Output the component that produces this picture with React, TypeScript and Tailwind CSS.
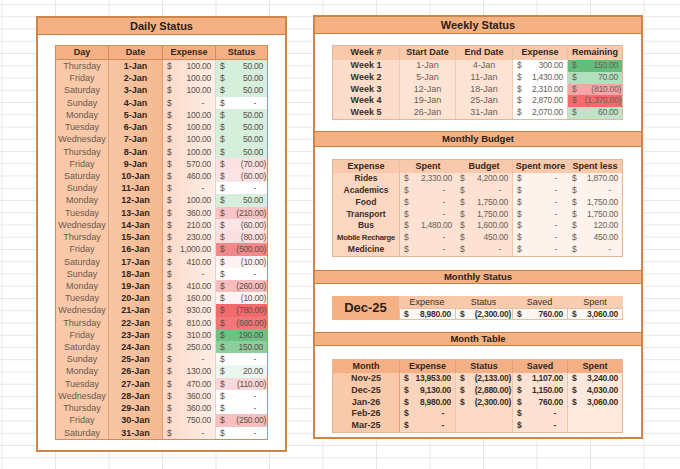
import React from 'react';

type Daily = { day: string; date: string; exp: string; st: string; c: string };

const DAILY: Daily[] = [
  { day: 'Thursday', date: '1-Jan', exp: '100.00', st: '50.00', c: '#d6eedc' },
  { day: 'Friday', date: '2-Jan', exp: '100.00', st: '50.00', c: '#d6eedc' },
  { day: 'Saturday', date: '3-Jan', exp: '100.00', st: '50.00', c: '#d6eedc' },
  { day: 'Sunday', date: '4-Jan', exp: '-', st: '-', c: '#ffffff' },
  { day: 'Monday', date: '5-Jan', exp: '100.00', st: '50.00', c: '#d6eedc' },
  { day: 'Tuesday', date: '6-Jan', exp: '100.00', st: '50.00', c: '#d6eedc' },
  { day: 'Wednesday', date: '7-Jan', exp: '100.00', st: '50.00', c: '#d6eedc' },
  { day: 'Thursday', date: '8-Jan', exp: '100.00', st: '50.00', c: '#d6eedc' },
  { day: 'Friday', date: '9-Jan', exp: '570.00', st: '(70.00)', c: '#fbe1e2' },
  { day: 'Saturday', date: '10-Jan', exp: '460.00', st: '(60.00)', c: '#fbe4e5' },
  { day: 'Sunday', date: '11-Jan', exp: '-', st: '-', c: '#ffffff' },
  { day: 'Monday', date: '12-Jan', exp: '100.00', st: '50.00', c: '#d6eedc' },
  { day: 'Tuesday', date: '13-Jan', exp: '360.00', st: '(210.00)', c: '#f8c4c5' },
  { day: 'Wednesday', date: '14-Jan', exp: '210.00', st: '(60.00)', c: '#fbe4e5' },
  { day: 'Thursday', date: '15-Jan', exp: '230.00', st: '(80.00)', c: '#fadfe0' },
  { day: 'Friday', date: '16-Jan', exp: '1,000.00', st: '(500.00)', c: '#f48789' },
  { day: 'Saturday', date: '17-Jan', exp: '410.00', st: '(10.00)', c: '#fdf3f3' },
  { day: 'Sunday', date: '18-Jan', exp: '-', st: '-', c: '#ffffff' },
  { day: 'Monday', date: '19-Jan', exp: '410.00', st: '(260.00)', c: '#f7bcbd' },
  { day: 'Tuesday', date: '20-Jan', exp: '160.00', st: '(10.00)', c: '#fdf3f3' },
  { day: 'Wednesday', date: '21-Jan', exp: '930.00', st: '(780.00)', c: '#f26a6c' },
  { day: 'Thursday', date: '22-Jan', exp: '810.00', st: '(660.00)', c: '#f37678' },
  { day: 'Friday', date: '23-Jan', exp: '310.00', st: '190.00', c: '#6cc183' },
  { day: 'Saturday', date: '24-Jan', exp: '250.00', st: '150.00', c: '#8ccf9d' },
  { day: 'Sunday', date: '25-Jan', exp: '-', st: '-', c: '#ffffff' },
  { day: 'Monday', date: '26-Jan', exp: '130.00', st: '20.00', c: '#ebf6ee' },
  { day: 'Tuesday', date: '27-Jan', exp: '470.00', st: '(110.00)', c: '#fad7d8' },
  { day: 'Wednesday', date: '28-Jan', exp: '360.00', st: '-', c: '#ffffff' },
  { day: 'Thursday', date: '29-Jan', exp: '360.00', st: '-', c: '#ffffff' },
  { day: 'Friday', date: '30-Jan', exp: '750.00', st: '(250.00)', c: '#f7bfc0' },
  { day: 'Saturday', date: '31-Jan', exp: '-', st: '-', c: '#ffffff' },
];

const WEEKS = [
  { w: 'Week 1', s: '1-Jan', e: '4-Jan', exp: '300.00', rem: '150.00', c: '#63be7b' },
  { w: 'Week 2', s: '5-Jan', e: '11-Jan', exp: '1,430.00', rem: '70.00', c: '#b3dfbf' },
  { w: 'Week 3', s: '12-Jan', e: '18-Jan', exp: '2,310.00', rem: '(810.00)', c: '#f7a4a6' },
  { w: 'Week 4', s: '19-Jan', e: '25-Jan', exp: '2,870.00', rem: '(1,370.00)', c: '#f36b6d' },
  { w: 'Week 5', s: '26-Jan', e: '31-Jan', exp: '2,070.00', rem: '60.00', c: '#bfe4c9' },
];

const BUDGET = [
  ['Rides', '2,330.00', '4,200.00', '-', '1,870.00'],
  ['Academics', '-', '-', '-', '-'],
  ['Food', '-', '1,750.00', '-', '1,750.00'],
  ['Transport', '-', '1,750.00', '-', '1,750.00'],
  ['Bus', '1,480.00', '1,600.00', '-', '120.00'],
  ['Mobile Recharge', '-', '450.00', '-', '450.00'],
  ['Medicine', '-', '-', '-', '-'],
];

const MONTHS: (string | null)[][] = [
  ['Nov-25', '13,953.00', '(2,133.00)', '1,107.00', '3,240.00'],
  ['Dec-25', '9,130.00', '(2,880.00)', '1,150.00', '4,030.00'],
  ['Jan-26', '8,980.00', '(2,300.00)', '760.00', '3,060.00'],
  ['Feb-26', '-', null, '-', null],
  ['Mar-25', '-', null, '-', null],
];

// accounting-style cell: "$" on the left, number on the right
function Money({ v, className = '' }: { v: string | null; className?: string }) {
  if (v === null) return <div className={className} />;
  const pad = v === '-' ? 'pr-[11px]' : v.startsWith('(') ? 'pr-[1px]' : 'pr-[4px]';
  return (
    <div className={`flex justify-between pl-[4px] ${pad} tracking-[-0.25px] text-[8.5px] ${className}`}>
      <span>$</span>
      <span>{v}</span>
    </div>
  );
}

function Bar({ title, className = '' }: { title: string; className?: string }) {
  return (
    <div
      className={`flex items-center justify-center bg-[#f4b183] border-y border-[#cc7d3f] font-bold text-[#2b2118] ${className}`}
    >
      {title}
    </div>
  );
}

function DailyStatus() {
  return (
    <div className="ml-[36px] mt-[16px] w-[251px] h-[436px] border-2 border-[#cd8548] bg-white flex flex-col">
      <div className="h-[17px] flex items-center justify-center bg-[#f4b183] border-b border-[#cc7d3f] text-[11px] font-bold text-[#2b2118]">
        Daily Status
      </div>
      <div className="ml-[17px] mt-[10px] w-[213px] border border-[#d38c55] text-[9px]">
        <div className="flex h-[14px] leading-[13px] bg-[#f4b084] border-b border-[#d38c55] font-bold text-[#33261c] text-center">
          <div className="w-[53px] border-r border-[#d38c55]">Day</div>
          <div className="w-[54px] border-r border-[#d38c55]">Date</div>
          <div className="w-[53px] border-r border-[#d38c55]">Expense</div>
          <div className="flex-1">Status</div>
        </div>
        {DAILY.map((r) => (
          <div key={r.date} className="flex h-[12.22px] leading-[12px] text-[#5a5048]">
            <div className="w-[53px] bg-[#f8c8a8] border-r border-[#e0a27a] text-center text-[#6b5a4d]">{r.day}</div>
            <div className="w-[54px] bg-[linear-gradient(to_right,#f8c6a5,#f4b890)] border-r border-[#e0a27a] text-center font-bold text-[#2e2620]">
              {r.date}
            </div>
            <Money
              v={r.exp}
              className="w-[53px] bg-[linear-gradient(to_right,#fcd8c6,#fdeee7)] border-r border-[#ead3c5]"
            />
            <div className="flex-1" style={{ backgroundColor: r.c }}>
              <Money v={r.st} />
            </div>
          </div>
        ))}
      </div>
    </div>
  );
}

function WeeklyTable() {
  return (
    <div className="ml-[17px] mt-[11px] w-[291px] border border-[#e3b697] text-[9px]">
      <div className="flex h-[14px] leading-[13px] bg-[#f8c9aa] font-bold text-[#33261c] text-center">
        <div className="w-[67px] border-r border-[#e9c0a4]">Week #</div>
        <div className="w-[56px] border-r border-[#e9c0a4]">Start Date</div>
        <div className="w-[57px] border-r border-[#e9c0a4]">End Date</div>
        <div className="w-[55px] border-r border-[#e9c0a4]">Expense</div>
        <div className="flex-1">Remaining</div>
      </div>
      {WEEKS.map((r) => (
        <div key={r.w} className="flex h-[11.8px] leading-[11.5px] text-[#6a6058]">
          <div className="w-[67px] bg-[#fcdccb] border-r border-[#eccab5] text-center font-bold text-[#3a2f27]">{r.w}</div>
          <div className="w-[56px] bg-[#fde3d4] border-r border-[#eccab5] text-center">{r.s}</div>
          <div className="w-[57px] bg-[#fde3d4] border-r border-[#eccab5] text-center">{r.e}</div>
          <Money v={r.exp} className="w-[55px] bg-white border-r border-[#eccab5]" />
          <div className="flex-1" style={{ backgroundColor: r.c }}>
            <Money v={r.rem} />
          </div>
        </div>
      ))}
    </div>
  );
}

function BudgetTable() {
  return (
    <div className="ml-[17px] mt-[12px] w-[291px] border border-[#e3b697] text-[9px]">
      <div className="flex h-[13px] leading-[12px] bg-[#f8c9aa] font-bold text-[#33261c] text-center">
        <div className="w-[67px] border-r border-[#e9c0a4]">Expense</div>
        <div className="w-[56px]">Spent</div>
        <div className="w-[57px] border-r border-[#e9c0a4]">Budget</div>
        <div className="w-[55px]">Spent more</div>
        <div className="flex-1">Spent less</div>
      </div>
      {BUDGET.map((r) => (
        <div key={r[0]} className="flex h-[11.86px] leading-[11.5px] text-[#6a6058]">
          <div
            className={`w-[67px] bg-[#fbd6c0] border-r border-[#e4b999] text-center font-bold text-[#3a2f27] whitespace-nowrap ${
              r[0].length > 12 ? 'text-[7.8px] tracking-[-0.3px]' : 'text-[8.5px]'
            }`}
          >
            {r[0]}
          </div>
          <Money v={r[1]} className="w-[56px] bg-[#fde2d3]" />
          <Money v={r[2]} className="w-[57px] bg-[#fde2d3] border-r border-[#eccab5]" />
          <Money v={r[3]} className="w-[55px] bg-[#fef2ec]" />
          <Money v={r[4]} className="flex-1 bg-[#fef2ec]" />
        </div>
      ))}
    </div>
  );
}

function MonthlyStatus() {
  const cols = [
    ['Expense', '8,980.00'],
    ['Status', '(2,300.00)'],
    ['Saved', '760.00'],
    ['Spent', '3,060.00'],
  ];
  const widths = ['w-[56px]', 'w-[57px]', 'w-[55px]', 'flex-1'];
  return (
    <div className="ml-[17px] mt-[12px] w-[291px] h-[24px] flex text-[9px]">
      <div className="w-[67px] flex items-center justify-center bg-[#f4b183] text-[13px] font-bold text-[#2b2118]">
        Dec-25
      </div>
      <div className="flex-1 flex flex-col">
        <div className="flex h-[12px] leading-[12px] bg-[linear-gradient(to_right,#f8c6a6,#f9cfb4)] text-[#3a2f27] text-center">
          {cols.map(([h], i) => (
            <div key={h} className={widths[i]}>
              {h}
            </div>
          ))}
        </div>
        <div className="flex h-[12px] leading-[11px] bg-[#fff7f3] border border-[#e7bfa2] font-bold text-[#3a2f27]">
          {cols.map(([h, v], i) => (
            <Money key={h} v={v} className={`${widths[i]} ${i < 3 ? 'border-r border-[#e7bfa2]' : ''}`} />
          ))}
        </div>
      </div>
    </div>
  );
}

function MonthTable() {
  const bgs = ['bg-[#fbd4bd]', 'bg-[#fcdac6]', 'bg-[#fde2d3]', 'bg-[#fde9de]'];
  const widths = ['w-[56px]', 'w-[57px]', 'w-[55px]', 'flex-1'];
  return (
    <div className="ml-[17px] mt-[13px] w-[291px] border border-[#e3b697] text-[9px] font-bold">
      <div className="flex h-[13px] leading-[12px] bg-[#f4b084] text-[#33261c] text-center">
        <div className="w-[67px] border-r border-[#e0a27a]">Month</div>
        {['Expense', 'Status', 'Saved', 'Spent'].map((h, i) => (
          <div key={h} className={`${widths[i]} ${i < 3 ? 'border-r border-[#e0a27a]' : ''}`}>
            {h}
          </div>
        ))}
      </div>
      {MONTHS.map((r) => (
        <div key={r[0]} className="flex h-[11.8px] leading-[11.5px] text-[#3a2f27]">
          <div className="w-[67px] bg-[#f8c9aa] border-r border-[#e0a27a] text-center">{r[0]}</div>
          {r.slice(1).map((v, i) => (
            <Money
              key={i}
              v={v}
              className={`${widths[i]} ${bgs[i]} ${i < 3 ? 'border-r border-[#ecc6ad]' : ''}`}
            />
          ))}
        </div>
      ))}
    </div>
  );
}

function RightPanel() {
  return (
    <div className="ml-[26px] mt-[15px] w-[330px] h-[424px] border-2 border-[#cd8548] bg-white flex flex-col">
      <div className="h-[17px] flex items-center justify-center bg-[#f4b183] border-b border-[#cc7d3f] text-[11px] font-bold text-[#2b2118]">
        Weekly Status
      </div>
      <WeeklyTable />
      <Bar title="Monthly Budget" className="mt-[11px] h-[16px] text-[9.5px]" />
      <BudgetTable />
      <Bar title="Monthly Status" className="mt-[13px] h-[14px] text-[9.5px]" />
      <MonthlyStatus />
      <Bar title="Month Table" className="mt-[12px] h-[14px] text-[9.5px]" />
      <MonthTable />
    </div>
  );
}

export default function App() {
  return (
    <div className="w-[680px] h-[469px] overflow-hidden flex items-start bg-white bg-[linear-gradient(to_right,#e6e6e6_1px,transparent_1px),linear-gradient(to_bottom,#e6e6e6_1px,transparent_1px)] bg-size-[53.5px_12.25px] bg-position-[1.5px_4px] font-['Liberation_Sans',Arial,sans-serif]">
      <DailyStatus />
      <RightPanel />
    </div>
  );
}
